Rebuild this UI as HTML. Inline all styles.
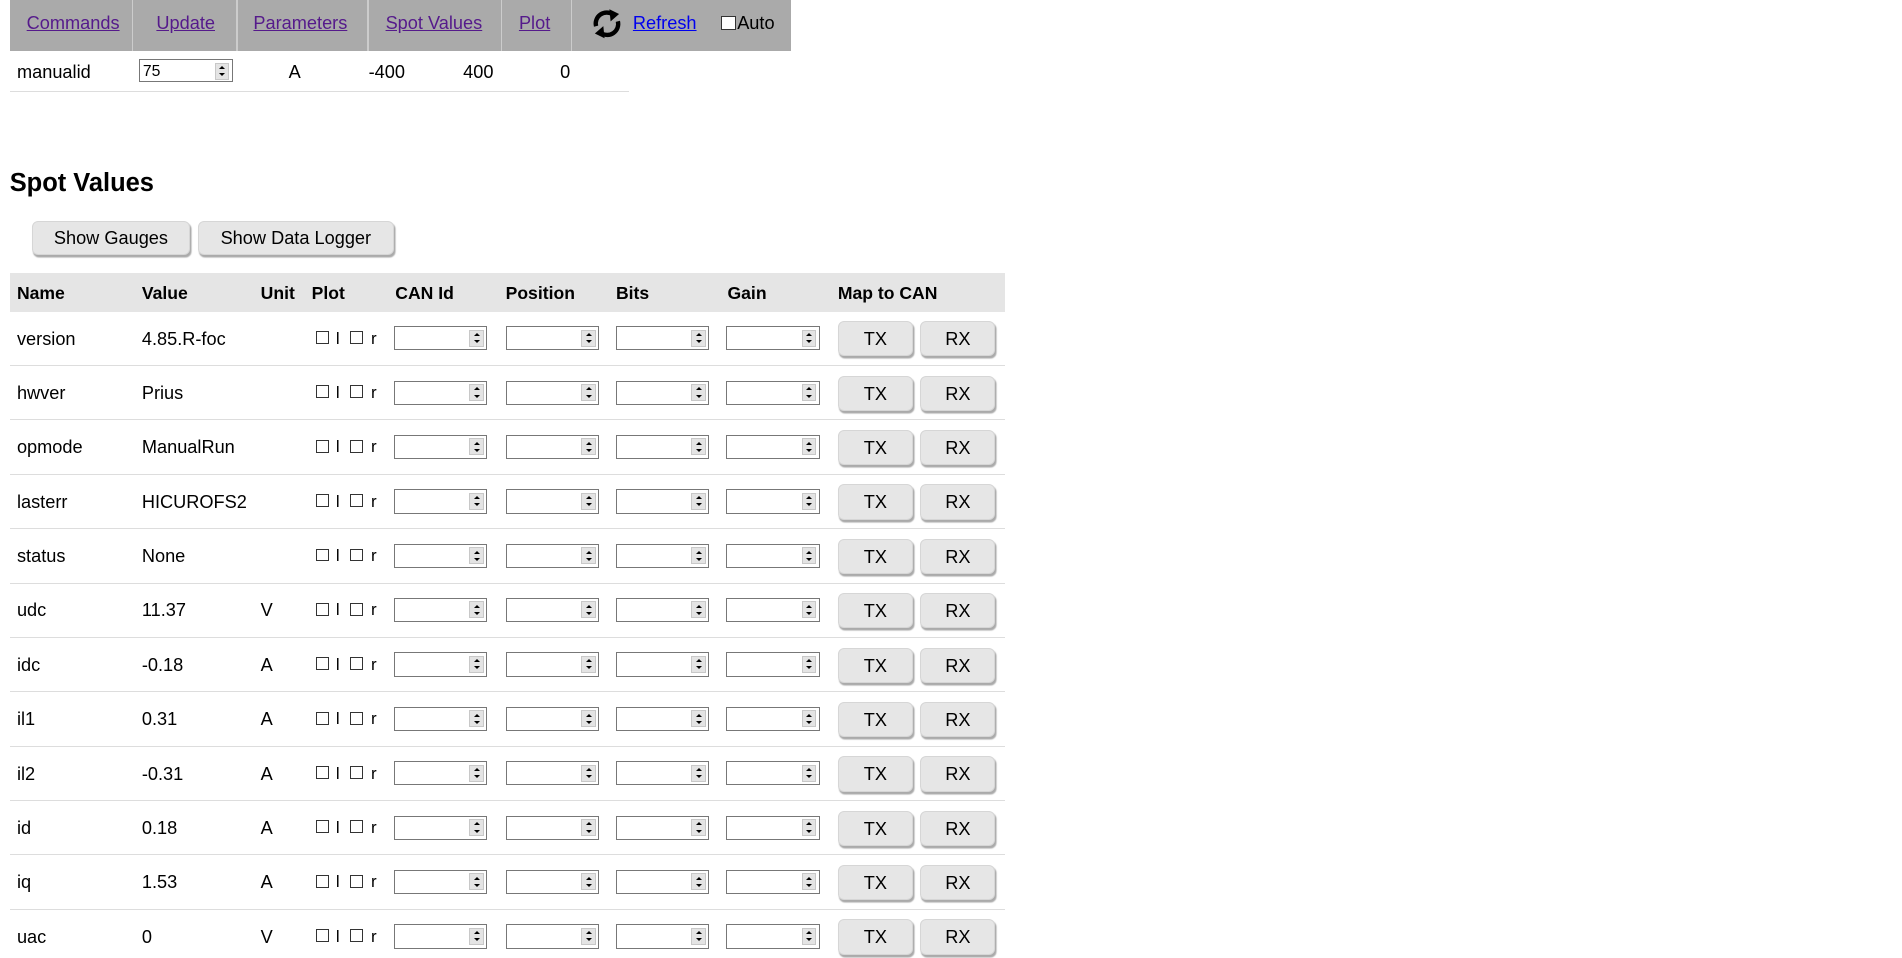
<!DOCTYPE html>
<html><head><meta charset="utf-8"><style>
html,body{margin:0;padding:0;background:#fff;overflow:hidden;}
body{width:1570px;height:790px;zoom:1.2125;position:relative;font-family:"Liberation Sans",Arial,sans-serif;font-size:15px;color:#000;}
.a{position:absolute;white-space:nowrap;}
#nav{position:absolute;left:8px;top:0;width:644px;height:42px;background:#aaa;}
#nav .sep{position:absolute;top:0;width:1px;height:42px;background:#ccc;}
#nav a{position:absolute;top:11px;color:#551a8b;text-decoration:underline;font-size:15px;}
.inp{position:absolute;box-sizing:border-box;border:1px solid #777;background:#fff;height:20px;}
.spin{position:absolute;right:2px;top:2px;width:12px;height:14px;background:#e4e4e4;border:1px solid #c8c8c8;box-sizing:border-box;}
.spin:before{content:"";position:absolute;left:3px;top:2px;border-left:3px solid transparent;border-right:3px solid transparent;border-bottom:3px solid #000;}
.spin:after{content:"";position:absolute;left:3px;bottom:2px;border-left:3px solid transparent;border-right:3px solid transparent;border-top:3px solid #000;}
.btn{position:absolute;box-sizing:border-box;background:#e6e6e6;border:1px solid #d6d6d6;border-radius:5px;box-shadow:1px 2px 1px #aaa;text-align:center;font-size:15px;}
.row{position:absolute;left:8px;width:821px;height:44.85px;box-sizing:border-box;border-bottom:1px solid #ddd;}
.row .t{position:absolute;top:14px;white-space:nowrap;}
.cb{position:absolute;top:16px;width:9px;height:9px;border:1px solid #333;}
.hd{position:absolute;top:8px;font-weight:bold;font-size:14.5px;}
</style></head><body>
<div id="nav">
<div class="sep" style="left:101px"></div><div class="sep" style="left:187px"></div><div class="sep" style="left:295px"></div><div class="sep" style="left:405px"></div><div class="sep" style="left:463px"></div>
<a style="left:14px">Commands</a><a style="left:121px">Update</a><a style="left:201px">Parameters</a><a style="left:310px">Spot Values</a><a style="left:420px">Plot</a>
<svg class="a" style="left:479px;top:7px" width="28" height="26" viewBox="0 0 28 26"><path d="M5 15 A9 9 0 0 1 19 5.5" fill="none" stroke="#000" stroke-width="3.6"/><path d="M16 1 L24 5 L17 11 Z" fill="#000"/><path d="M23 11 A9 9 0 0 1 9 20.5" fill="none" stroke="#000" stroke-width="3.6"/><path d="M12 25 L4 21 L11 15 Z" fill="#000"/></svg>
<a style="left:514px;color:#0000ee">Refresh</a>
<div class="a" style="left:587px;top:13px;width:10px;height:10px;border:1px solid #333;background:#fff"></div>
<div class="a" style="left:600px;top:11px">Auto</div>
</div>
<div class="a" style="left:14px;top:51px">manualid</div>
<div class="inp" style="left:115px;top:49px;width:77px;height:19px"><span style="position:absolute;left:2px;top:2px;font-size:13px">75</span><div class="spin"></div></div>
<div class="a" style="left:238px;top:51px">A</div>
<div class="a" style="left:304px;top:51px">-400</div>
<div class="a" style="left:382px;top:51px">400</div>
<div class="a" style="left:462px;top:51px">0</div>
<div class="a" style="left:8px;top:75px;width:511px;height:1px;background:#ddd"></div>
<div class="a" style="left:8px;top:139px;font-size:21px;font-weight:bold">Spot Values</div>
<div class="btn" style="left:26px;top:182px;width:131px;height:28px;line-height:28px">Show Gauges</div>
<div class="btn" style="left:163px;top:182px;width:162px;height:28px;line-height:28px">Show Data Logger</div>
<div class="a" style="left:8px;top:225px;width:821px;height:32px;background:#e5e5e5">
<span class="hd" style="left:6px">Name</span><span class="hd" style="left:109px">Value</span><span class="hd" style="left:207px">Unit</span><span class="hd" style="left:249px">Plot</span><span class="hd" style="left:318px">CAN Id</span><span class="hd" style="left:409px">Position</span><span class="hd" style="left:500px">Bits</span><span class="hd" style="left:592px">Gain</span><span class="hd" style="left:683px">Map to CAN</span>
</div>
<div id="rows"></div>
<script>
var d=[["version","4.85.R-foc",""],["hwver","Prius",""],["opmode","ManualRun",""],["lasterr","HICUROFS2",""],["status","None",""],["udc","11.37","V"],["idc","-0.18","A"],["il1","0.31","A"],["il2","-0.31","A"],["id","0.18","A"],["iq","1.53","A"],["uac","0","V"]];
var h="";
d.forEach(function(r,i){
var top=257+i*44.85;
h+='<div class="row" style="top:'+top+'px">'+
'<span class="t" style="left:6px">'+r[0]+'</span><span class="t" style="left:109px">'+r[1]+'</span><span class="t" style="left:207px">'+r[2]+'</span>'+
'<div class="cb" style="left:253px"></div><span class="t" style="left:269px;font-size:14px">l</span><div class="cb" style="left:281px"></div><span class="t" style="left:298px;font-size:14px">r</span>';
[317,409,500,591].forEach(function(x){h+='<div class="inp" style="left:'+x+'px;top:12px;width:77px"><div class="spin"></div></div>';});
h+='<div class="btn" style="left:683px;top:8px;width:62px;height:29px;line-height:29px">TX</div><div class="btn" style="left:751px;top:8px;width:62px;height:29px;line-height:29px">RX</div></div>';
});
document.getElementById("rows").innerHTML=h;
</script>
</body></html>
